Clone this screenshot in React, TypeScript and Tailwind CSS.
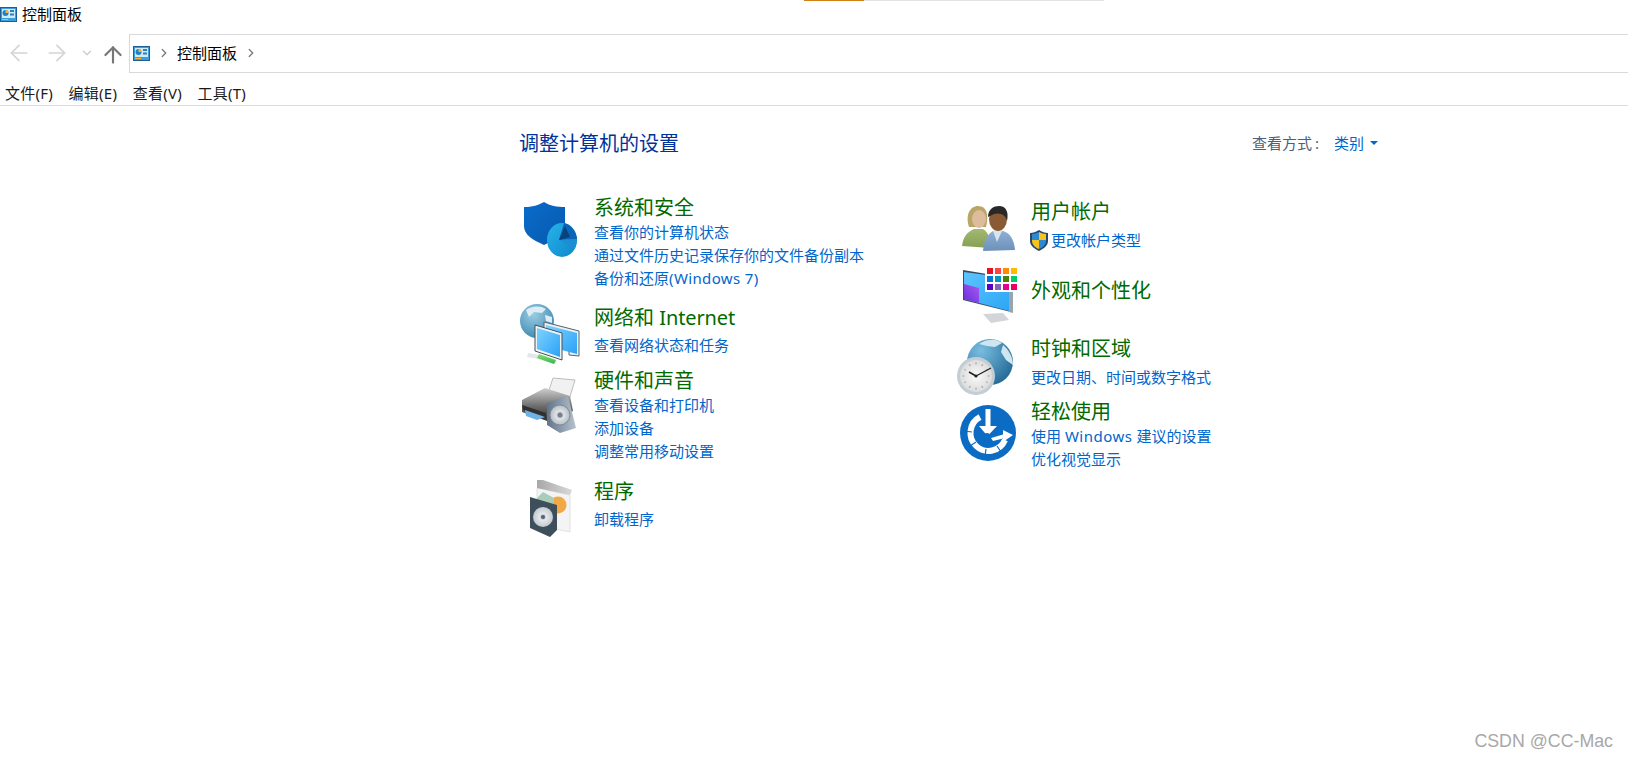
import { ArrowLeft, ArrowRight, ArrowUp, ChevronDown, ChevronRight } from "lucide-react";

const font = "font-['Noto_Sans','Noto_Sans_CJK_SC',sans-serif]";

function PanelIcon() {
  return (
    <svg width="17" height="15" viewBox="0 0 17 15">
      <rect x="0.5" y="0.5" width="16" height="14" fill="#3aa0dc" stroke="#1a5f95" />
      <rect x="2" y="2" width="13" height="9" fill="#cfeaf8" />
      <circle cx="5.5" cy="6" r="3" fill="#1f7fc8" />
      <path d="M5.5 6V3a3 3 0 0 1 3 3z" fill="#f3b33d" />
      <rect x="10" y="3" width="4" height="2" fill="#2f7fb8" />
      <rect x="10" y="6.5" width="4" height="2" fill="#2f7fb8" />
      <rect x="2" y="12" width="6" height="1" fill="#f3b33d" />
    </svg>
  );
}

function ShieldIcon() {
  return (
    <svg width="56" height="56" viewBox="0 0 56 56">
      <defs>
        <linearGradient id="pie" x1="0" y1="0" x2="1" y2="1">
          <stop offset="0" stopColor="#26b4e8" />
          <stop offset="1" stopColor="#0f86cc" />
        </linearGradient>
        <linearGradient id="shieldFill" x1="0" y1="0" x2="1" y2="1">
          <stop offset="0" stopColor="#0a6ccb" />
          <stop offset="1" stopColor="#0659ad" />
        </linearGradient>
      </defs>
      <path d="M0 5C8 5 15 3 20 0C26 4 33 5 41 5V24C41 33 31 38 20 43C9 38 0 33 0 24Z" fill="url(#shieldFill)" />
      <ellipse cx="38" cy="38" rx="15" ry="17" fill="url(#pie)" />
      <path d="M40 21C47 22 52 29 53 37L35 38Z" fill="#0c64b4" />
      <path d="M35 38L53 37C53 41 52 44 50 47Z" fill="#1a8fd4" />
      <path d="M41 24L35 38L46 35Z" fill="#07427f" />
    </svg>
  );
}

function NetworkIcon() {
  return (
    <svg width="60" height="60" viewBox="0 0 60 60">
      <defs>
        <radialGradient id="globeA" cx="0.4" cy="0.3" r="0.85">
          <stop offset="0" stopColor="#9ccde4" />
          <stop offset="1" stopColor="#2f7fa8" />
        </radialGradient>
        <linearGradient id="screenA" x1="0" y1="0" x2="1" y2="1">
          <stop offset="0" stopColor="#7fd2ff" />
          <stop offset="1" stopColor="#2ba2f6" />
        </linearGradient>
        <linearGradient id="linkA" x1="0" y1="0" x2="0" y2="1">
          <stop offset="0" stopColor="#8be07a" />
          <stop offset="1" stopColor="#2fb648" />
        </linearGradient>
      </defs>
      <circle cx="17" cy="17" r="17" fill="url(#globeA)" />
      <path d="M6 6C11 2 20 1 26 5L22 9L14 8L9 13Z M25 11L32 13L32 19L26 17Z" fill="#dcedf5" />
      <path d="M24 18L59 27V52L49 51V33L24 26Z" fill="#eaf0f4" stroke="#52646f" strokeWidth="1" />
      <path d="M26 21L57 29V50L26 42Z" fill="url(#screenA)" />
      <path d="M15 21L42 29V56L15 47Z" fill="#eef3f6" stroke="#42525d" strokeWidth="1" />
      <path d="M17 24L40 31V53L17 45Z" fill="url(#screenA)" />
      <path d="M8 49L20 51L37 57L35 60L18 55L7 53Z" fill="#e4e7e9" />
      <path d="M19 50L36 56L34 60L17 54Z" fill="url(#linkA)" />
    </svg>
  );
}

function PrinterIcon() {
  return (
    <svg width="58" height="58" viewBox="0 0 58 58">
      <defs>
        <linearGradient id="printerBody" x1="0" y1="0" x2="0" y2="1">
          <stop offset="0" stopColor="#cfcfcf" />
          <stop offset="0.55" stopColor="#6a6a6a" />
          <stop offset="1" stopColor="#2c2c2c" />
        </linearGradient>
        <linearGradient id="speakerBox" x1="0" y1="0" x2="1" y2="0">
          <stop offset="0" stopColor="#62748a" />
          <stop offset="1" stopColor="#b7c3ce" />
        </linearGradient>
        <radialGradient id="cone" cx="0.5" cy="0.5" r="0.55">
          <stop offset="0" stopColor="#8c98a2" />
          <stop offset="0.35" stopColor="#dfe3e6" />
          <stop offset="1" stopColor="#aeb7bf" />
        </radialGradient>
      </defs>
      <path d="M33 1L55 3L49 23L27 19Z" fill="#f1f1f1" stroke="#bdbdbd" />
      <path d="M2 23L25 11L50 19L53 34L30 45L2 35Z" fill="url(#printerBody)" />
      <path d="M2 28L26 36V41L3 33Z" fill="#303030" />
      <path d="M5 33L25 40L17 43L6 39Z" fill="#6fb2e4" />
      <path d="M27 26L48 19L56 51L40 56L27 48Z" fill="url(#speakerBox)" />
      <circle cx="40" cy="38" r="10" fill="url(#cone)" stroke="#7f8b96" />
      <circle cx="40" cy="38" r="2.5" fill="#76828d" />
    </svg>
  );
}

function ProgramIcon() {
  return (
    <svg width="50" height="58" viewBox="0 0 50 58">
      <defs>
        <linearGradient id="boxTop" x1="0" y1="0" x2="1" y2="0">
          <stop offset="0" stopColor="#a8a8a8" />
          <stop offset="1" stopColor="#d8d8d8" />
        </linearGradient>
        <radialGradient id="disc" cx="0.5" cy="0.5" r="0.55">
          <stop offset="0" stopColor="#808b95" />
          <stop offset="0.3" stopColor="#e6e9ec" />
          <stop offset="1" stopColor="#bcc4ca" />
        </radialGradient>
      </defs>
      <path d="M7 8L40 15V52L7 45Z" fill="#f4f4f4" stroke="#e2e2e2" />
      <path d="M7 0H13L42 10L40 15L7 8Z" fill="url(#boxTop)" />
      <circle cx="28" cy="25" r="8.5" fill="#f0a945" />
      <path d="M7 18L13 12L24 18L22 45L7 40Z" fill="#a9cdb8" />
      <path d="M0 17L27 25V50L20 57L0 48Z" fill="#3e4f5c" />
      <circle cx="13" cy="37" r="10" fill="url(#disc)" />
      <circle cx="13" cy="37" r="2" fill="#59646e" />
    </svg>
  );
}

function UsersIcon() {
  return (
    <svg width="54" height="46" viewBox="0 0 54 46">
      <defs>
        <linearGradient id="shirtA" x1="0" y1="0" x2="0" y2="1">
          <stop offset="0" stopColor="#a4b870" />
          <stop offset="1" stopColor="#84a056" />
        </linearGradient>
        <linearGradient id="shirtB" x1="0" y1="0" x2="0" y2="1">
          <stop offset="0" stopColor="#8fb0d4" />
          <stop offset="1" stopColor="#6d90ba" />
        </linearGradient>
      </defs>
      <path d="M7 22C3 10 8 1 16 1C25 1 27 10 24 22Z" fill="#b9a666" />
      <ellipse cx="17" cy="14" rx="7" ry="9" fill="#dcbc9c" />
      <path d="M0 41C1 32 5 27 12 24H21C26 27 28 32 29 43Z" fill="url(#shirtA)" />
      <ellipse cx="36" cy="14" rx="9" ry="12" fill="#8a5a34" />
      <path d="M26 12C26 4 32 1 37 1C44 1 47 7 45 16C44 10 38 7 32 9C30 10 28 11 26 12Z" fill="#2a2826" />
      <path d="M21 46C22 34 26 29 31 26H41C48 28 52 34 53 45Z" fill="url(#shirtB)" />
      <path d="M31 26H40L35 37Z" fill="#d8e4ee" />
    </svg>
  );
}

function UacShield() {
  return (
    <svg width="18" height="21" viewBox="0 0 18 21">
      <path d="M9 0C12 2 15 3 18 3V11C18 16 13 19 9 21C5 19 0 16 0 11V3C3 3 6 2 9 0Z" fill="#29476d" />
      <path d="M9 2V10H2V4C4 4 7 3 9 2Z" fill="#2b8ad0" />
      <path d="M9 2C11 3 14 4 16 4V10H9Z" fill="#f6c21e" />
      <path d="M2 10H9V19C6 18 2 15 2 11Z" fill="#f6c21e" />
      <path d="M9 10H16V11C16 15 12 18 9 19Z" fill="#2b8ad0" />
    </svg>
  );
}

function AppearanceIcon() {
  const swatches = [
    "#e81123", "#ff4343", "#ff8c00", "#ffb900",
    "#0078d7", "#0099bc", "#498205", "#00cc6a",
    "#5c00c4", "#8764b8", "#e3008c", "#ea005e",
  ];
  return (
    <div className="relative h-[60px] w-[58px]">
      <svg width="58" height="60" viewBox="0 0 58 60">
        <defs>
          <linearGradient id="wall" x1="0" y1="0" x2="1" y2="1">
            <stop offset="0" stopColor="#5cc4ff" />
            <stop offset="1" stopColor="#2ba6f5" />
          </linearGradient>
          <linearGradient id="wallPurple" x1="1" y1="0" x2="0" y2="1">
            <stop offset="0" stopColor="#a45cf0" />
            <stop offset="1" stopColor="#6b2cd8" />
          </linearGradient>
        </defs>
        <path d="M2 4L50 12V46L2 34Z" fill="#3a4a58" />
        <path d="M3 6L48 12V45L3 33Z" fill="url(#wall)" />
        <path d="M3 18L18 22V37L3 33Z" fill="url(#wallPurple)" />
        <path d="M48 12H52V47L48 46Z" fill="#9aa4ad" />
        <path d="M22 48L42 47L48 54L30 57Z" fill="#d3d6d9" />
      </svg>
      <div className="absolute right-0 top-0 grid grid-cols-4 gap-[2px] bg-white p-[2px]">
        {swatches.map((c) => (
          <span key={c} className="h-[6px] w-[6px]" style={{ background: c }} />
        ))}
      </div>
    </div>
  );
}

function ClockIcon() {
  const ticks = [0, 30, 60, 90, 120, 150, 180, 210, 240, 270, 300, 330];
  return (
    <svg width="58" height="58" viewBox="0 0 58 58">
      <defs>
        <radialGradient id="globeB" cx="0.3" cy="0.25" r="0.9">
          <stop offset="0" stopColor="#79bde0" />
          <stop offset="1" stopColor="#1c628f" />
        </radialGradient>
        <radialGradient id="face" cx="0.5" cy="0.5" r="0.6">
          <stop offset="0" stopColor="#fafafa" />
          <stop offset="1" stopColor="#d6d6d6" />
        </radialGradient>
      </defs>
      <circle cx="33" cy="23" r="23" fill="url(#globeB)" />
      <path d="M22 5C29 0 39 -1 45 4L38 8L30 7Z M46 6C52 11 56 18 56 26L49 21L44 13Z" fill="#cfe6f0" />
      <circle cx="19" cy="37" r="19" fill="#c3cdd4" />
      <circle cx="19" cy="37" r="16" fill="url(#face)" />
      {ticks.map((a) => (
        <rect key={a} x="18.6" y="23.5" width="0.8" height="2" fill="#8a8a8a" transform={`rotate(${a} 19 37)`} />
      ))}
      <path d="M19 37L12 33" stroke="#222" strokeWidth="1.6" />
      <path d="M19 37L34 29" stroke="#222" strokeWidth="1.2" />
      <circle cx="19" cy="37" r="1.6" fill="#222" />
    </svg>
  );
}

function EaseIcon() {
  return (
    <svg width="56" height="56" viewBox="0 0 56 56">
      <circle cx="28" cy="28" r="28" fill="#0c6cc4" />
      <path d="M20 12A18 18 0 1 0 45 35" fill="none" stroke="#fff" strokeWidth="6" />
      <path d="M4 26L12 27M10 41L16 37M25 51L26 44M41 47L37 41" stroke="#0c6cc4" strokeWidth="1.2" />
      <rect x="25.5" y="4" width="5" height="19" fill="#fff" />
      <path d="M19 21L37 21L27.5 31Z" fill="#fff" />
      <circle cx="27" cy="31" r="3" fill="#0c6cc4" />
      <path d="M31 33L43 29.5V25L53 30L43 37V33.5L33 36Z" fill="#fff" />
    </svg>
  );
}

type Category = {
  title: React.ReactNode;
  name: string;
  icon: React.ReactNode;
  links: React.ReactNode[];
  height: string;
  gap: string;
  iconClass: string;
  textClass?: string;
};

const leftColumn: Category[] = [
  {
    name: "security",
    title: "系统和安全",
    icon: <ShieldIcon />,
    links: [
      "查看你的计算机状态",
      "通过文件历史记录保存你的文件备份副本",
      <>
        备份和还原<span className="tracking-[0.36px]">(Windows 7)</span>
      </>,
    ],
    height: "h-[110px]",
    gap: "mt-0",
    iconClass: "pl-[5px] pt-[9px]",
  },
  {
    name: "network",
    title: (
      <>
        网络和 <span className="tracking-[-0.1px]">Internet</span>
      </>
    ),
    icon: <NetworkIcon />,
    links: ["查看网络状态和任务"],
    height: "h-[63px]",
    gap: "mt-[3px]",
    iconClass: "pt-[1px] pl-[1px]",
  },
  {
    name: "hardware",
    title: "硬件和声音",
    icon: <PrinterIcon />,
    links: ["查看设备和打印机", "添加设备", "调整常用移动设置"],
    height: "h-[111px]",
    gap: "mt-0",
    iconClass: "pl-[1px] pt-[11px]",
  },
  {
    name: "programs",
    title: "程序",
    icon: <ProgramIcon />,
    links: ["卸载程序"],
    height: "h-[64px]",
    gap: "mt-[3px]",
    iconClass: "pl-[11px] pt-[3px]",
  },
];

const rightColumn: Category[] = [
  {
    name: "users",
    title: "用户帐户",
    icon: <UsersIcon />,
    links: [
      <span key="uac" className="-ml-[1px] flex items-center gap-[3px]">
        <UacShield />
        更改帐户类型
      </span>,
    ],
    height: "h-[64px]",
    gap: "mt-[4px]",
    iconClass: "pl-[6px] pt-[8px]",
  },
  {
    name: "appearance",
    title: "外观和个性化",
    icon: <AppearanceIcon />,
    links: [],
    height: "h-[73px]",
    gap: "mt-0",
    iconClass: "pl-[5px] pt-[5px]",
    textClass: "pt-[15px]",
  },
  {
    name: "clock",
    title: "时钟和区域",
    icon: <ClockIcon />,
    links: ["更改日期、时间或数字格式"],
    height: "h-[63px]",
    gap: "mt-[4px]",
    iconClass: "pl-[1px] pt-[5px]",
  },
  {
    name: "ease",
    title: "轻松使用",
    icon: <EaseIcon />,
    links: [
      <>
        使用 <span className="tracking-[0.5px]">Windows</span> 建议的设置
      </>,
      "优化视觉显示",
    ],
    height: "h-[90px]",
    gap: "mt-0",
    iconClass: "pl-[4px] pt-[8px]",
  },
];

function CategoryRow({ item }: { item: Category }) {
  return (
    <div className={`flex ${item.height}`}>
      <div className={`w-[75px] shrink-0 ${item.iconClass}`}>{item.icon}</div>
      <div className={`flex flex-col ${item.textClass ?? ""}`}>
        <a className="h-[28px] text-[20px] leading-[30px] text-[#006a00]">{item.title}</a>
        <div className={`flex flex-col ${item.gap}`}>
          {item.links.map((link, i) => (
            <a key={i} className="h-[23px] text-[15px] leading-[23px] text-[#0066cc]">
              {link}
            </a>
          ))}
        </div>
      </div>
    </div>
  );
}

export default function App() {
  return (
    <div className={`relative h-[758px] w-full overflow-hidden bg-white text-black ${font}`}>
      {/* title bar */}
      <div className="relative flex h-[29px] items-center gap-[5px]">
        <PanelIcon />
        <span className="text-[15px]">控制面板</span>
        <div className="absolute left-[804px] top-0 flex h-px w-[300px]">
          <div className="w-[60px] bg-[#cf8116]" />
          <div className="flex-1 bg-[#e3e3e3]" />
        </div>
      </div>

      {/* address row */}
      <div className="flex h-[46px] items-center pt-[2px]">
        <div className="flex w-[129px] items-center pl-[6px]">
          <ArrowLeft size={26} strokeWidth={1.6} className="text-[#d4d4d4]" />
          <ArrowRight size={26} strokeWidth={1.6} className="ml-[12px] text-[#d4d4d4]" />
          <ChevronDown size={14} strokeWidth={2.2} className="ml-[10px] text-[#cccccc]" />
          <ArrowUp size={26} strokeWidth={2} className="ml-[6px] mt-[3px] text-[#777777]" />
        </div>
        <div className="flex h-[39px] flex-1 items-center border border-r-0 border-[#d9d9d9] pl-[3px]">
          <PanelIcon />
          <ChevronRight size={14} strokeWidth={2.2} className="ml-[7px] text-[#7a7a7a]" />
          <span className="ml-[6px] text-[15px]">控制面板</span>
          <ChevronRight size={14} strokeWidth={2.2} className="ml-[7px] text-[#7a7a7a]" />
        </div>
      </div>

      {/* menu */}
      <div className="flex h-[31px] items-center gap-[15.5px] border-b border-[#dcdcdc] pl-[5px] pt-[6px] text-[15px] tracking-[0.25px] text-[#1a1a1a]">
        <span>文件(F)</span>
        <span>编辑(E)</span>
        <span>查看(V)</span>
        <span>工具(T)</span>
      </div>

      {/* content */}
      <main className="ml-[519px] w-[859px] pt-[23px]">
        <div className="flex items-center justify-between">
          <h1 className="text-[20px] leading-[30px] text-[#003399]">调整计算机的设置</h1>
          <div className="flex items-center pb-[2px] text-[15px]">
            <span className="text-[#4c607a]">
              查看方式<span className="ml-[3px]">:</span>
            </span>
            <span className="ml-[15px] text-[#0066cc]">类别</span>
            <span className="ml-[6px] h-0 w-0 border-x-[4px] border-t-[4px] border-x-transparent border-t-[#0066cc]" />
          </div>
        </div>
        <div className="mt-[34px] flex">
          <div className="w-[437px]">
            {leftColumn.map((c) => (
              <CategoryRow key={c.name} item={c} />
            ))}
          </div>
          <div className="pt-[4px]">
            {rightColumn.map((c) => (
              <CategoryRow key={c.name} item={c} />
            ))}
          </div>
        </div>
      </main>

      <span className="absolute bottom-[3px] right-[15px] font-['Liberation_Sans',sans-serif] text-[17.8px] text-[#a8a8a8]">
        CSDN @CC-Mac
      </span>
    </div>
  );
}
